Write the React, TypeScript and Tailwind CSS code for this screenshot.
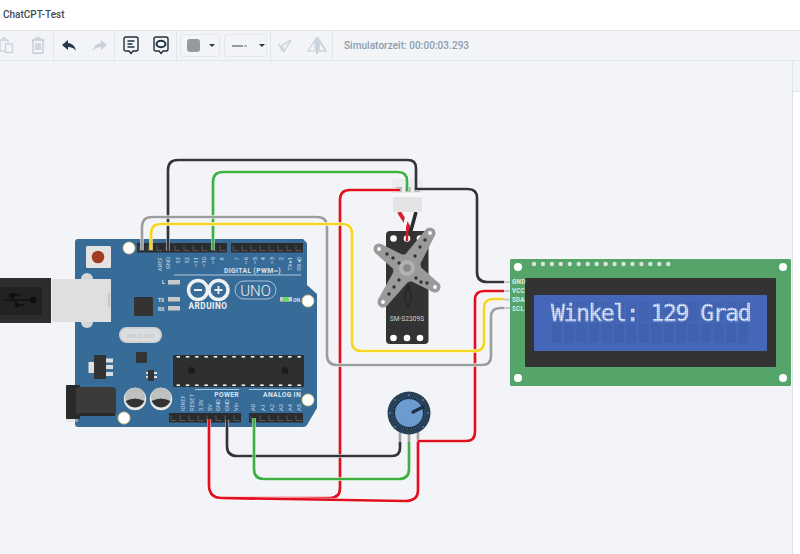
import { Fragment } from "react";

const sans = "font-['Roboto',sans-serif]";

// wires: [colour, path]
const wires: [string, string][] = [
  ["#e0101f", "M400 190 H350 Q340 190 340 200 V488 Q340 498 330 498 H222 Q209 498 209 485 V419"],
  ["#e0101f", "M222 498 L405 501 Q418 501 418 490 V442 M418 441 H466 Q475 441 475 432 V300 Q475 291 484 291 H504"],
  ["#333538", "M168 250 V170 Q168 160 178 160 H408 Q416 160 416 168 V190 M416 189 H468 Q477 189 477 198 V272 Q477 282 487 282 H504"],
  ["#3cb043", "M213 250 V182 Q213 172 223 172 H398 Q407 172 407 181 V191"],
  ["#9b9d9f", "M142 250 V227 Q142 217 152 217 H317 Q327 217 327 227 V355 Q327 365 337 365 H482 Q491 365 491 356 V317 Q491 308 500 308 H504"],
  ["#f6d523", "M151 250 V234 Q151 224 161 224 H342 Q352 224 352 234 V342 Q352 351 362 351 H474 Q484 351 484 342 V308 Q484 299 493 299 H504"],
  ["#333538", "M227 420 V446 Q227 456 237 456 H392 Q400 456 400 448 V442"],
  ["#3cb043", "M254 418 V469 Q254 479 264 479 H399 Q409 479 409 469 V442"],
];

const topLabels: [string, number][] = [
  ["AREF", 160], ["GND", 168], ["13", 178], ["12", 187], ["~11", 196], ["~10", 204], ["~9", 213], ["8", 222],
  ["7", 237], ["~6", 246], ["~5", 255], ["4", 263], ["~3", 272], ["2", 281], ["TX▸1", 290], ["RX◂0", 299],
];
const bottomLabels: [string, number][] = [
  ["IOREF", 183], ["RESET", 192], ["3.3V", 201], ["5V", 210], ["GND", 218], ["GND", 227], ["Vin", 236],
  ["A0", 253], ["A1", 263], ["A2", 272], ["A3", 281], ["A4", 290], ["A5", 299],
];

const armTips = [[379, 249], [430, 233], [435, 287], [383, 302]];

// tapered servo arm from the hub out to a tip
function armPoints(tx: number, ty: number) {
  const cx = 407;
  const cy = 268;
  const len = Math.hypot(tx - cx, ty - cy);
  const nx = -(ty - cy) / len;
  const ny = (tx - cx) / len;
  return [
    [cx + nx * 10, cy + ny * 10],
    [tx + nx * 5.5, ty + ny * 5.5],
    [tx - nx * 5.5, ty - ny * 5.5],
    [cx - nx * 10, cy - ny * 10],
  ]
    .map((p) => p.join(","))
    .join(" ");
}

function Header({ x, y, pins }: { x: number; y: number; pins: number }) {
  return (
    <g>
      <rect x={x} y={y} width={pins * 9} height={9.5} fill="#2b2c2d" />
      {Array.from({ length: pins }, (_, i) => (
        <path key={i} d={`M${x + 2 + i * 9} ${y + 2.5} v5 h5.5`} fill="none" stroke="#55585a" strokeWidth={1} />
      ))}
    </g>
  );
}

function Hole({ x, y, r = 6 }: { x: number; y: number; r?: number }) {
  return <circle cx={x} cy={y} r={r} fill="#fff" stroke="#d8c88a" strokeWidth={1} />;
}

function Arduino() {
  return (
    <g fontFamily="Roboto, sans-serif">
      <path
        d="M78 239 H303 L307 243 V285 L317 294 V392 L317 408 L307 425 Q306 427 303 427 H78 Q75 427 75 424 V242 Q75 239 78 239Z"
        fill="#386c98"
      />
      <Hole x={129} y={248} />
      <Hole x={308} y={301} />
      <Hole x={308} y={400} />
      <Hole x={124} y={418} />

      {/* reset button */}
      <rect x={86} y={246} width={25} height={22} rx={1.5} fill="#e3e3e3" />
      <circle cx={98} cy={257} r={6.3} fill="#a33d22" />

      {/* usb */}
      <circle cx={87} cy={279} r={6} fill="#d4d6d8" />
      <circle cx={87} cy={322} r={6} fill="#d4d6d8" />
      <rect x={52} y={279} width={59} height={43} fill="#dedfe0" />
      <rect x={108} y={293} width={2} height={14} fill="#c4c5c6" />
      <rect x={0} y={278} width={51} height={45} fill="#2d2d2d" />
      <rect x={0} y={287} width={42} height={28} fill="#222" />
      <g stroke="#0f0f0f" strokeWidth={1.3} fill="#0f0f0f">
        <path d="M5 300 H33" />
        <path d="M11 300 L15 295 H20 M14 300 L18 305 H24" fill="none" />
        <rect x={10} y={294} width={4} height={3} />
        <circle cx={33} cy={300} r={2.6} />
        <circle cx={17} cy={305} r={1.6} />
      </g>

      <rect x={134} y={297} width={19} height={19} rx={1} fill="#333" />

      {/* crystal */}
      <rect x={119} y={327} width={43} height={16} rx={8} fill="#cfd1d3" />
      <rect x={121} y={329} width={39} height={12} rx={6} fill="#dcdddf" />
      <text x={140.5} y={338} fontSize={6} textAnchor="middle" fill="#c2c4c6">
        SM16.000
      </text>

      <rect x={136} y={352} width={11} height={11} rx={1} fill="#333" />

      {/* regulator */}
      <rect x={88.5} y={362} width={6} height={11} fill="#e0e0e0" />
      <rect x={94} y={355} width={12} height={24} fill="#333" />
      <rect x={106} y={358.5} width={7} height={4} fill="#ddd" />
      <rect x={106} y={365} width={7} height={4} fill="#ddd" />
      <rect x={106} y={372} width={7} height={4} fill="#ddd" />

      <rect x={148} y={370} width={6} height={11} fill="#333" />
      <rect x={146} y={372} width={2} height={2} fill="#ddd" />
      <rect x={146} y={376} width={2} height={2} fill="#ddd" />
      <rect x={154} y={372} width={3} height={2} fill="#ddd" />
      <rect x={154} y={376} width={3} height={2} fill="#ddd" />

      {/* power jack */}
      <rect x={66} y={385} width={12} height={37} rx={1} fill="#dcdcdc" opacity={0.5} />
      <rect x={66} y={385} width={14} height={34} rx={1} fill="#2a2a2a" />
      <rect x={76} y={387} width={40} height={29} rx={4} fill="#3b3b3b" />
      <rect x={77} y={413} width={38} height={3} fill="#2a2a2a" />

      {/* caps */}
      {[135, 161].map((cx) => (
        <g key={cx}>
          <circle cx={cx} cy={399} r={11.2} fill="#e9e9e9" />
          <circle cx={cx} cy={397.5} r={10} fill="#bfc1c1" />
          <path d={`M${cx - 9.5} 401 Q${cx} 396 ${cx + 9.5} 401 Q${cx + 6} 407.5 ${cx} 407.5 Q${cx - 6} 407.5 ${cx - 9.5} 401Z`} fill="#333" />
        </g>
      ))}

      {/* atmega */}
      <rect x={173} y={355} width={131} height={32} rx={1} fill="#2e2f30" />
      {Array.from({ length: 14 }, (_, i) => (
        <Fragment key={i}>
          <rect x={176.5 + i * 9.3} y={356} width={3.5} height={1.6} fill="#f2f2f2" />
          <rect x={176.5 + i * 9.3} y={384.4} width={3.5} height={1.6} fill="#f2f2f2" />
        </Fragment>
      ))}
      <circle cx={191.5} cy={370.5} r={3.5} fill="#1d1d1d" />
      <circle cx={285} cy={370.5} r={3.5} fill="#1d1d1d" />

      <Header x={137} y={243} pins={10} />
      <Header x={231} y={243} pins={8} />
      <Header x={169} y={413} pins={8} />
      <Header x={249} y={413} pins={6} />

      {/* silk labels */}
      {topLabels.map(([t, x]) => (
        <text key={x} transform={`translate(${x + 2.2} 257) rotate(-90)`} fontSize={6} textAnchor="end" fill="#c9d8e4">
          {t}
        </text>
      ))}
      {bottomLabels.map(([t, x]) => (
        <text key={x} transform={`translate(${x + 2.2} 411) rotate(-90)`} fontSize={5.8} fill="#c9d8e4">
          {t}
        </text>
      ))}
      <text x={281} y={272.5} fontSize={6.8} fontWeight={700} letterSpacing={0.35} textAnchor="end" fill="#dbe5ee">
        DIGITAL (PWM~)
      </text>
      <path d="M174 275 H301" stroke="#d4e0ea" strokeWidth={0.8} />
      <text x={239} y={397} fontSize={6.8} fontWeight={700} letterSpacing={0.3} textAnchor="end" fill="#dbe5ee">
        POWER
      </text>
      <path d="M195 389.5 H239 M249 389.5 H301" stroke="#d4e0ea" strokeWidth={0.8} />
      <text x={301} y={397} fontSize={6.8} fontWeight={700} letterSpacing={0.3} textAnchor="end" fill="#dbe5ee">
        ANALOG IN
      </text>

      {/* leds */}
      <text x={162} y={284} fontSize={5} fontWeight={700} fill="#dbe5ee">L</text>
      <rect x={168} y={280} width={12} height={4.5} fill="#c9c9c9" />
      <text x={158} y={301.5} fontSize={5} fontWeight={700} fill="#dbe5ee">TX</text>
      <rect x={168} y={297} width={12} height={4.5} fill="#c9c9c9" />
      <text x={158} y={310.5} fontSize={5} fontWeight={700} fill="#dbe5ee">RX</text>
      <rect x={168} y={306} width={12} height={4.5} fill="#c9c9c9" />
      <rect x={280} y={297} width={12} height={4.5} fill="#c9c9c9" />
      <rect x={283} y={297} width={5.5} height={4.5} fill="#5fe05a" />
      <text x={293} y={301.5} fontSize={5} fontWeight={700} fill="#dbe5ee">ON</text>

      {/* logo */}
      <circle cx={198} cy={290} r={9.5} fill="none" stroke="#eef2f5" strokeWidth={3.4} />
      <circle cx={218.5} cy={290} r={9.5} fill="none" stroke="#eef2f5" strokeWidth={3.4} />
      <path d="M194 290 H202 M214.5 290 H222.500 M218.500 286 V294" stroke="#eef2f5" strokeWidth={1.8} />
      <text x={208} y={308.8} fontSize={8.2} fontWeight={700} letterSpacing={0.55} textAnchor="middle" fill="#eef2f5">
        ARDUINO
      </text>
      <rect x={235} y={281} width={41} height={18} rx={9} fill="none" stroke="#c9d8e4" strokeWidth={0.8} />
      <text x={255.5} y={295.5} fontSize={15} fontWeight={300} textAnchor="middle" fill="#eef2f5">
        UNO
      </text>
    </g>
  );
}

function Servo() {
  return (
    <g fontFamily="Roboto, sans-serif">
      <path d="M399 212 L408 226 V240" stroke="#d81f2e" strokeWidth={4} fill="none" />
      <path d="M408 212 L403 232" stroke="#f7f7f7" strokeWidth={3.5} fill="none" />
      <path d="M416 212 L410 234" stroke="#2b2b2b" strokeWidth={3.5} fill="none" />
      <rect x={386} y={231} width={42.5} height={113} rx={4} fill="#333" />
      <circle cx={393.5} cy={238.5} r={3.3} fill="#fff" />
      <circle cx={407} cy={238.5} r={3.3} fill="#fff" />
      <circle cx={420} cy={238.5} r={3.3} fill="#fff" />
      <path d="M407 231 V241" stroke="#d0192a" strokeWidth={2.5} />
      <circle cx={393.5} cy={338} r={3.3} fill="#fff" />
      <circle cx={407} cy={338} r={3.3} fill="#fff" />
      <circle cx={420} cy={338} r={3.3} fill="#fff" />
      <path d="M407 285 V290 Q402 296 408 306 Q414 296 409 290 V285" stroke="#1f1f1f" strokeWidth={1} fill="none" />
      {armTips.map(([x, y]) => (
        <Fragment key={x}>
          <polygon points={armPoints(x, y)} fill="#9a9a9a" />
          <circle cx={x} cy={y} r={5.5} fill="#9a9a9a" />
          <circle cx={x} cy={y} r={1.9} fill="#fff" />
        </Fragment>
      ))}
      <circle cx={407} cy={268} r={14} fill="#9a9a9a" />
      <circle cx={407} cy={268} r={8} fill="#b1b1b1" />
      <circle cx={407} cy={268} r={3.8} fill="#888" />
      {[[387, 254], [393, 258], [399, 263], [425, 240], [420, 247], [415, 256], [416, 278], [421, 282], [427, 283], [399, 280], [394, 287], [389, 294]].map(([x, y]) => (
        <circle key={`${x}-${y}`} cx={x} cy={y} r={1.7} fill="#333" />
      ))}
      <text x={407} y={321} fontSize={6.5} textAnchor="middle" letterSpacing={0.1} fill="#d2d2d2">
        SM-S2309S
      </text>
      {/* connector */}
      <rect x={393} y={180} width={29} height={13} fill="#eceef0" stroke="#dfe1e3" strokeWidth={0.6} />
      <rect x={393} y={196} width={29} height={16} rx={1} fill="#e4e4e4" />
      <rect x={393} y={193} width={29} height={4} fill="#f7f7f7" />
      <rect x={396} y={187} width={6} height={5} fill="#b9bbbd" />
      <rect x={405} y={187} width={6} height={5} fill="#b9bbbd" />
      <rect x={414} y={187} width={6} height={5} fill="#b9bbbd" />
    </g>
  );
}

function Pot() {
  return (
    <g>
      {[400, 409, 418].map((x) => (
        <rect key={x} x={x - 1.3} y={430} width={2.6} height={13} fill="#a3a5a7" />
      ))}
      <circle cx={409} cy={413} r={21.5} fill="#2a4057" />
      <circle cx={409} cy={413} r={17} fill="#1d2f42" />
      <circle cx={409} cy={413} r={16} fill="none" stroke="#3f6384" strokeWidth={1.6} strokeDasharray="1 1" />
      <circle cx={409} cy={413} r={14} fill="#6c9bcf" />
      {[[409, 395], [423, 400], [428, 413], [423, 427], [395, 427], [390, 413], [395, 400]].map(([x, y]) => (
        <circle key={`${x}-${y}`} cx={x} cy={y} r={0.9} fill="#5d84a8" />
      ))}
      <path d="M413 412 L423 407" stroke="#1d2f42" strokeWidth={3.2} strokeLinecap="round" />
    </g>
  );
}

function Lcd() {
  return (
    <g>
      <defs>
        <pattern id="dots" x={0} y={0} width={2} height={2} patternUnits="userSpaceOnUse">
          <path d="M0 0 H2 M0 0 V2" stroke="#4467b7" strokeWidth={0.5} fill="none" />
        </pattern>
      </defs>
      <rect x={510} y={259} width={281} height={127} rx={1.5} fill="#55a46a" />
      {[[518, 267], [783, 267], [518, 378], [783, 378]].map(([x, y]) => (
        <circle key={`${x}-${y}`} cx={x} cy={y} r={4} fill="#fff" />
      ))}
      {Array.from({ length: 16 }, (_, i) => (
        <circle key={i} cx={534 + i * 8.95} cy={264} r={2.2} fill="#dde3de" />
      ))}
      <rect x={525} y={278} width={251} height={89} rx={1} fill="#333" />
      <rect x={534} y={295} width={233} height={56} rx={1} fill="#4467b7" />
      {Array.from({ length: 16 }, (_, i) => (
        <Fragment key={i}>
          <rect x={551.7 + i * 12.45} y={302} width={10} height={19} fill="#4062ae" />
          <rect x={551.7 + i * 12.45} y={323} width={10} height={20} fill="#4062ae" />
        </Fragment>
      ))}
      <text
        x={551}
        y={320.5}
        fontFamily="'DejaVu Sans Mono', monospace"
        fontSize={23}
        letterSpacing={-1.4}
        fill="#f2f5fb"
        stroke="#f2f5fb"
        strokeWidth={0.35}
      >
        {"Winkel: 129 Grad"}
      </text>
      <rect x={550} y={300} width={204} height={24} fill="url(#dots)" />
      {[["GND", 284], ["VCC", 293], ["SDA", 302], ["SCL", 311]].map(([t, y]) => (
        <text key={t} x={512} y={y} fontFamily="Roboto, sans-serif" fontSize={6.3} fontWeight={700} letterSpacing={0.2} fill="#dcebe0">
          {t}
        </text>
      ))}
      {[282, 291, 299.5, 308].map((y) => (
        <rect key={y} x={503} y={y - 1} width={7} height={2} fill="#c9cbcd" />
      ))}
    </g>
  );
}

function Sep() {
  return <div className="h-full w-px bg-[#e2e5e9]" />;
}

export default function App() {
  return (
    <div className={`flex h-[554px] w-[800px] flex-col overflow-hidden bg-[#f3f4f7] ${sans}`}>
      <div className="flex h-[30px] items-center bg-white pb-[2px] pl-[3px] text-[10px] font-medium text-[#3c4a5a]">ChatCPT-Test</div>
      <div className="flex h-[31px] items-center border-y border-[#e2e5e9] bg-[#f3f4f7]">
        <div className="flex h-full w-[53px] items-center">
          <svg width="15" height="17" viewBox="0 0 15 17" className="ml-[-1px]" fill="none" stroke="#cbd4dd" strokeWidth="1.3">
            <path d="M1 3H9V6M4 1H6.500V3H4Z" />
            <path d="M6.500 7H13.500V15.500H6.500ZM6.500 14H1V3" />
          </svg>
          <svg width="14" height="17" viewBox="0 0 14 17" className="ml-[17px]" fill="none" stroke="#c2ccd6" strokeWidth="1.4">
            <path d="M0.500 3H13.500M5 3V1H9V3M2 3V15.500Q2 16.300 3 16.300H11Q12 16.300 12 15.500V3M5 6V13M7 6V13M9 6V13" />
          </svg>
        </div>
        <Sep />
        <div className="flex h-full w-[60px] items-center pl-[8px]">
          <svg width="15" height="12" viewBox="0 0 15 12" fill="#27394d">
            <path d="M6 0 0 5l6 5V7c3.500 0 6 1 8 4-.5-4-3-7.500-8-8Z" />
          </svg>
          <svg width="15" height="12" viewBox="0 0 15 12" className="ml-[15px]" fill="#c7d0da">
            <path d="M9 0l6 5-6 5V7C5.500 7 3 8 1 11c.5-4 3-7.500 8-8Z" />
          </svg>
        </div>
        <Sep />
        <div className="flex h-full w-[61px] items-center pl-[8px]">
          <svg width="16" height="20" viewBox="0 0 16 20" fill="none" stroke="#1f2f40" strokeWidth="1.4">
            <path d="M3 1H13Q15 1 15 3V13Q15 15 13 15H10L8 17.500 6 15H3Q1 15 1 13V3Q1 1 3 1Z" />
            <path d="M4.500 5H11.500M4.500 8H9.500M4.500 11H11.500" />
          </svg>
          <svg width="16" height="20" viewBox="0 0 16 20" className="ml-[14px]" fill="none" stroke="#1f2f40" strokeWidth="1.4">
            <path d="M3 1H13Q15 1 15 3V13Q15 15 13 15H10L8 17.500 6 15H3Q1 15 1 13V3Q1 1 3 1Z" />
            <ellipse cx="8" cy="8" rx="4.500" ry="3.200" strokeWidth="2" />
          </svg>
        </div>
        <Sep />
        <div className="flex h-full w-[93px] items-center gap-[4px] pl-[3px]">
          <div className="flex h-[23px] w-[40px] items-center rounded-[3px] border border-[#e6e8ec] pl-[6px]">
            <div className="h-[13px] w-[13px] rounded-[3px] bg-[#969a9e]" />
            <div className="ml-[9px] h-0 w-0 border-x-[3px] border-t-[3px] border-x-transparent border-t-[#27394d]" />
          </div>
          <div className="flex h-[23px] w-[43px] items-center rounded-[3px] border border-[#e6e8ec] pl-[7px]">
            <div className="h-[2px] w-[11px] bg-[#969a9e]" />
            <div className="ml-[1px] h-[2px] w-[3px] bg-[#b5b8bb]" />
            <div className="ml-[12px] h-0 w-0 border-x-[3px] border-t-[3px] border-x-transparent border-t-[#27394d]" />
          </div>
        </div>
        <Sep />
        <div className="flex h-full w-[61px] items-center pl-[7px]">
          <svg width="14" height="14" viewBox="0 0 14 14" fill="none" stroke="#c7d0da" strokeWidth="1.3">
            <path d="M13 1 6 12.500 4 6.500ZM1 4.500 4.500 12.500" />
          </svg>
          <svg width="20" height="17" viewBox="0 0 20 17" className="ml-[15px]" fill="none" stroke="#c7d0da" strokeWidth="1.2">
            <path d="M8 3 1 14H8Z" />
            <path d="M10 0V17" stroke="#aab6c2" />
            <path d="M12 3 19 14H12Z" strokeWidth="1.6" />
          </svg>
        </div>
        <Sep />
        <div className="pl-[11px] text-[10px] font-medium tracking-[0.05px] text-[#8b9cad]">Simulatorzeit: 00:00:03.293</div>
      </div>
      <div className="flex min-h-0 flex-1">
        <svg viewBox="0 61 792 493" className="block h-full w-[792px]">
          <Arduino />
          <Servo />
          <Pot />
          <Lcd />
          {wires.map(([color, d], i) => (
            <g key={i} fill="none" strokeLinejoin="round">
              <path d={d} stroke="#fff" strokeOpacity={0.7} strokeWidth={3.8} />
              <path d={d} stroke={color} strokeWidth={2.7} />
            </g>
          ))}
        </svg>
        <div className="flex w-[8px] flex-col border-l border-[#dfe3ea]">
          <div className="h-[31px] border-b border-[#dfe3ea]" />
          <div className="flex-1 bg-white" />
        </div>
      </div>
    </div>
  );
}
